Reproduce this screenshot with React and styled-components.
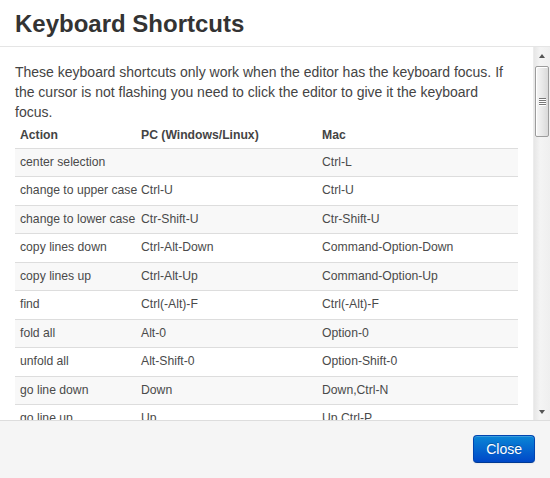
import React from "react";
import styled, { createGlobalStyle } from "styled-components";

const Global = createGlobalStyle`
  html, body { margin: 0; padding: 0; background: #fff; }
  body { font-family: "Liberation Sans", Arial, sans-serif; color: #333; }
  * { box-sizing: border-box; }
`;

const Modal = styled.div`
  width: 550px;
  height: 478px;
  display: flex;
  flex-direction: column;
  background: #fff;
  overflow: hidden;
`;

const Header = styled.div`
  height: 47px;
  padding: 9px 15px 7px 15px;
  border-bottom: 1px solid #e5e5e5;
  flex: none;
`;

const Title = styled.h3`
  margin: 0;
  font-size: 24px;
  line-height: 30px;
  font-weight: bold;
  color: #333;
`;

const Body = styled.div`
  flex: 1;
  min-height: 0;
  display: flex;
`;

const Content = styled.div`
  flex: 1;
  min-width: 0;
  padding: 15px 15px 0 15px;
  overflow: hidden;
`;

const Intro = styled.p`
  margin: 0;
  font-size: 14px;
  line-height: 20px;
  color: #444;
`;

const Table = styled.table`
  width: 100%;
  border-collapse: collapse;
  border-spacing: 0;
  font-size: 12.2px;
  color: #4a4a4a;
  table-layout: fixed;
`;

const Th = styled.th`
  text-align: left;
  font-weight: bold;
  padding: 4px 5px;
  line-height: 18px;
  width: ${(p) => p.$w || "auto"};
  color: #444;
`;

const Row = styled.tr`
  background: ${(p) => (p.$odd ? "#f8f8f8" : "#fff")};
`;

const Td = styled.td`
  padding: 4px 5px;
  line-height: 19.44px;
  border-top: 1px solid #dddddd;
  white-space: nowrap;
`;

const Scrollbar = styled.div`
  width: 17px;
  flex: none;
  display: flex;
  flex-direction: column;
  background: linear-gradient(to right, #e6e6e6, #f4f4f4 40%, #efefef);
  border-left: 1px solid #ececec;
`;

const Arrow = styled.div`
  height: 17px;
  display: flex;
  align-items: center;
  justify-content: center;
  flex: none;
`;

const Tri = styled.div`
  width: 0;
  height: 0;
  border-left: 3.5px solid transparent;
  border-right: 3.5px solid transparent;
  ${(p) =>
    p.$down
      ? "border-top: 4px solid #555;"
      : "border-bottom: 4px solid #555;"}
`;

const Thumb = styled.div`
  margin: 2px 1px 0 1px;
  height: 71px;
  border: 1px solid #9c9c9c;
  border-radius: 2px;
  background: linear-gradient(to right, #f6f6f6, #e9e9e9 50%, #d9d9d9);
  box-shadow: inset 1px 1px 0 #fff;
  display: flex;
  flex-direction: column;
  align-items: center;
  justify-content: center;
  gap: 1px;
`;

const Grip = styled.div`
  width: 7px;
  height: 1px;
  background: #777;
  box-shadow: 0 1px 0 #fff;
`;

const Spacer = styled.div`
  flex: 1;
`;

const Footer = styled.div`
  height: 58px;
  flex: none;
  background: #f5f5f5;
  border-top: 1px solid #dddddd;
  display: flex;
  align-items: flex-start;
  justify-content: flex-end;
  padding: 14px 15px 0 15px;
`;

const Button = styled.button`
  font-family: "Liberation Sans", Arial, sans-serif;
  font-size: 14px;
  line-height: 20px;
  padding: 3px 12px;
  color: #fff;
  text-shadow: 0 -1px 0 rgba(0, 0, 0, 0.25);
  background: linear-gradient(to bottom, #0a86d6, #0048c8);
  border: 1px solid #0045b0;
  border-bottom-color: #003a94;
  border-radius: 4px;
  box-shadow: inset 0 1px 0 rgba(255, 255, 255, 0.2), 0 1px 2px rgba(0, 0, 0, 0.05);
  cursor: pointer;
`;

const rows = [
  ["center selection", "", "Ctrl-L"],
  ["change to upper case", "Ctrl-U", "Ctrl-U"],
  ["change to lower case", "Ctr-Shift-U", "Ctr-Shift-U"],
  ["copy lines down", "Ctrl-Alt-Down", "Command-Option-Down"],
  ["copy lines up", "Ctrl-Alt-Up", "Command-Option-Up"],
  ["find", "Ctrl(-Alt)-F", "Ctrl(-Alt)-F"],
  ["fold all", "Alt-0", "Option-0"],
  ["unfold all", "Alt-Shift-0", "Option-Shift-0"],
  ["go line down", "Down", "Down,Ctrl-N"],
  ["go line up", "Up", "Up,Ctrl-P"],
  ["go to end", "Ctrl-End,Ctrl-Down", "Command-End,Command-Down"],
  ["go to left", "Left", "Left,Ctrl-B"],
];

export default function App() {
  return (
    <>
      <Global />
      <Modal>
        <Header>
          <Title>Keyboard Shortcuts</Title>
        </Header>
        <Body>
          <Content>
            <Intro>
              These keyboard shortcuts only work when the editor has the keyboard focus. If
              the cursor is not flashing you need to click the editor to give it the keyboard
              focus.
            </Intro>
            <Table>
              <thead>
                <tr>
                  <Th $w="121px">Action</Th>
                  <Th $w="181px">PC (Windows/Linux)</Th>
                  <Th>Mac</Th>
                </tr>
              </thead>
              <tbody>
                {rows.map((r, i) => (
                  <Row key={i} $odd={i % 2 === 0}>
                    <Td>{r[0]}</Td>
                    <Td>{r[1]}</Td>
                    <Td>{r[2]}</Td>
                  </Row>
                ))}
              </tbody>
            </Table>
          </Content>
          <Scrollbar>
            <Arrow>
              <Tri />
            </Arrow>
            <Thumb>
              <Grip />
              <Grip />
              <Grip />
              <Grip />
            </Thumb>
            <Spacer />
            <Arrow>
              <Tri $down />
            </Arrow>
          </Scrollbar>
        </Body>
        <Footer>
          <Button>Close</Button>
        </Footer>
      </Modal>
    </>
  );
}
